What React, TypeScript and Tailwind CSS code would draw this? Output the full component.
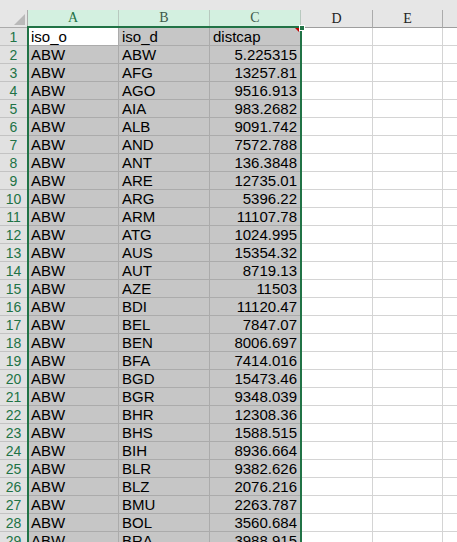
import React from "react";

const rows: [string, string, string][] = [
  ["iso_o", "iso_d", "distcap"],
  ["ABW", "ABW", "5.225315"],
  ["ABW", "AFG", "13257.81"],
  ["ABW", "AGO", "9516.913"],
  ["ABW", "AIA", "983.2682"],
  ["ABW", "ALB", "9091.742"],
  ["ABW", "AND", "7572.788"],
  ["ABW", "ANT", "136.3848"],
  ["ABW", "ARE", "12735.01"],
  ["ABW", "ARG", "5396.22"],
  ["ABW", "ARM", "11107.78"],
  ["ABW", "ATG", "1024.995"],
  ["ABW", "AUS", "15354.32"],
  ["ABW", "AUT", "8719.13"],
  ["ABW", "AZE", "11503"],
  ["ABW", "BDI", "11120.47"],
  ["ABW", "BEL", "7847.07"],
  ["ABW", "BEN", "8006.697"],
  ["ABW", "BFA", "7414.016"],
  ["ABW", "BGD", "15473.46"],
  ["ABW", "BGR", "9348.039"],
  ["ABW", "BHR", "12308.36"],
  ["ABW", "BHS", "1588.515"],
  ["ABW", "BIH", "8936.664"],
  ["ABW", "BLR", "9382.626"],
  ["ABW", "BLZ", "2076.216"],
  ["ABW", "BMU", "2263.787"],
  ["ABW", "BOL", "3560.684"],
  ["ABW", "BRA", "3988.915"],
];

const sans = { fontFamily: '"Liberation Sans", Arial, sans-serif' };
const serif = { fontFamily: '"Liberation Serif", "Times New Roman", serif' };

export default function App() {
  return (
    <div className="relative w-[457px] h-[542px] overflow-hidden bg-white">
      <div className="h-[10px] bg-[#e6e6e6]" />
      {/* column header */}
      <div className="flex h-[18px] bg-[#e6e6e6]" style={serif}>
        <div className="w-[28px] shrink-0 border-r border-b border-[#ababab] flex items-end justify-end pr-[2px] pb-[2px]">
          <svg width="11" height="11" viewBox="0 0 11 11">
            <polygon points="11,0 11,11 0,11" fill="#b9b9b9" />
          </svg>
        </div>
        {["A", "B", "C"].map((c) => (
          <div
            key={c}
            className={`w-[91px] shrink-0 flex items-center justify-center bg-[#d3f0e0] border-r border-[#b8c9bf] border-b-2 border-b-[#217346] text-[14px] leading-none ${c === "A" ? "text-[#217346]" : "text-[#3e5a4a]"}`}
          >
            {c}
          </div>
        ))}
        <div className="w-[72px] shrink-0 flex items-center justify-center border-r border-b border-[#ababab] border-b-[#9e9e9e] text-[14px] text-[#222]">
          D
        </div>
        <div className="w-[70px] shrink-0 flex items-center justify-center border-r border-b border-[#ababab] border-b-[#9e9e9e] text-[14px] text-[#222]">
          E
        </div>
        <div className="flex-1 border-b border-[#9e9e9e]" />
      </div>
      {/* rows */}
      {rows.map((r, i) => (
        <div key={i} className="flex h-[18px]" style={sans}>
          <div className="w-[28px] shrink-0 flex items-center justify-center bg-[#e1e1e1] border-r border-b border-[#c3c3c3] text-[14px] text-[#217346] leading-none">
            {i + 1}
          </div>
          <div
            className={`w-[91px] shrink-0 border-r border-b pl-[3px] text-[15px] leading-[17px] text-black ${i === 0 ? "bg-white border-[#ababab]" : "bg-[#c6c6c6] border-[#ababab]"}`}
          >
            {r[0]}
          </div>
          <div className="w-[91px] shrink-0 border-r border-b border-[#ababab] bg-[#c6c6c6] pl-[3px] text-[15px] leading-[17px] text-black">
            {r[1]}
          </div>
          <div
            className={`w-[91px] shrink-0 border-r border-b border-[#ababab] bg-[#c6c6c6] text-[15px] leading-[17px] text-black ${i === 0 ? "pl-[3px] text-left" : "pr-[3px] text-right"}`}
          >
            {r[2]}
          </div>
          <div className="w-[72px] shrink-0 border-r border-b border-[#d4d4d4]" />
          <div className="w-[70px] shrink-0 border-r border-b border-[#d4d4d4]" />
          <div className="flex-1 border-b border-[#d4d4d4]" />
        </div>
      ))}
      {/* selection border */}
      <div className="absolute left-[27px] top-[26px] w-[275px] h-[530px] border-2 border-[#217346] pointer-events-none" />
      {/* comment indicator */}
      <div className="absolute left-[295px] top-[28px] w-0 h-0 border-l-[4px] border-l-transparent border-t-[4px] border-t-[#c00000]" />
      {/* fill handle */}
      <div className="absolute left-[299px] top-[25px] w-[6px] h-[6px] bg-[#217346] border border-white" />
    </div>
  );
}
